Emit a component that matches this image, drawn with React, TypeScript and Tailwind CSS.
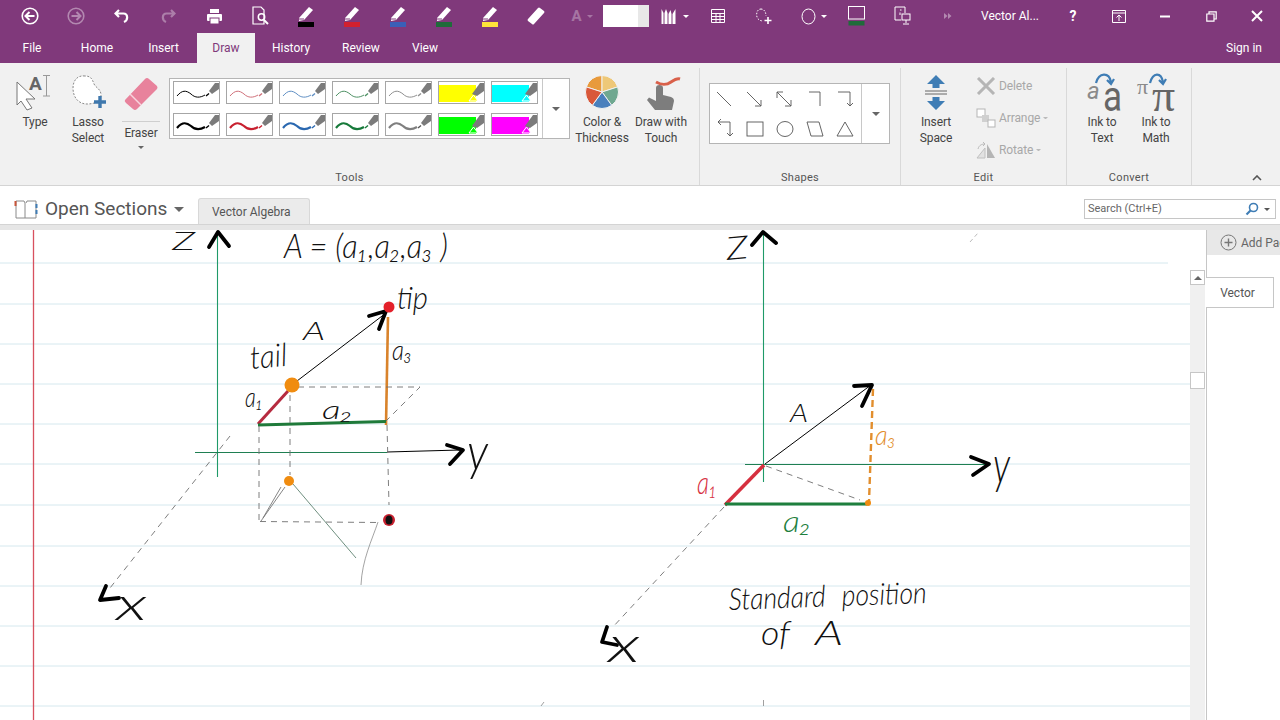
import React from "react";

const ink = "'Lato', 'DejaVu Sans', sans-serif";

function Q({ w = 46, children }: { w?: number; children?: React.ReactNode }) {
  return (
    <div className="flex items-center justify-center h-[32px] shrink-0" style={{ width: w }}>
      {children}
    </div>
  );
}

function QPen({ color }: { color: string }) {
  return (
    <svg width="20" height="24" viewBox="0 0 20 24">
      <path d="M3 14 L13 3 L17 6 L8 16 L3 17 Z" fill="#fff" />
      <path d="M3 15 L8 15" stroke="#80397b" strokeWidth="1" />
      <rect x="2" y="18" width="16" height="5" fill={color} />
    </svg>
  );
}

function Caret({ c = "#fff", s = 3 }: { c?: string; s?: number }) {
  return (
    <svg width={s * 2} height={s} viewBox="0 0 6 3" className="shrink-0">
      <path d="M0 0 H6 L3 3 Z" fill={c} />
    </svg>
  );
}

function TitleBar() {
  const stroke = { stroke: "#fff", fill: "none", strokeWidth: 1.6 };
  return (
    <div className="flex h-[33px] pl-[7px] bg-[#80397b] text-white">
      <Q>
        <svg width="18" height="18" viewBox="0 0 18 18">
          <circle cx="9" cy="9" r="7.8" {...stroke} />
          <path d="M13.5 9 H5 M8.5 5 L4.5 9 L8.5 13" {...stroke} strokeWidth="2" />
        </svg>
      </Q>
      <Q>
        <svg width="18" height="18" viewBox="0 0 18 18" opacity="0.4">
          <circle cx="9" cy="9" r="7.8" {...stroke} />
          <path d="M4.5 9 H13 M9.5 5 L13.5 9 L9.5 13" {...stroke} strokeWidth="2" />
        </svg>
      </Q>
      <Q>
        <svg width="16" height="16" viewBox="0 0 16 16">
          <path d="M5 2 L1.5 5.5 L5 9 M2 5.5 H9.5 C14 5.5 14.5 12 10 14" {...stroke} strokeWidth="2.2" />
        </svg>
      </Q>
      <Q>
        <svg width="16" height="16" viewBox="0 0 16 16" opacity="0.35">
          <path d="M11 2 L14.5 5.5 L11 9 M14 5.5 H6.5 C2 5.5 1.5 12 6 14" {...stroke} strokeWidth="2.2" />
        </svg>
      </Q>
      <Q>
        <svg width="17" height="17" viewBox="0 0 17 17">
          <rect x="4" y="1" width="9" height="4" fill="#fff" />
          <rect x="1" y="6" width="15" height="7" rx="1" fill="#fff" />
          <rect x="4" y="10" width="9" height="6" fill="#fff" stroke="#80397b" />
        </svg>
      </Q>
      <Q>
        <svg width="17" height="20" viewBox="0 0 17 20">
          <path d="M1 1 H9 L12 4 V18 H1 Z" {...stroke} strokeWidth="1.2" />
          <circle cx="9.5" cy="11" r="3.2" {...stroke} strokeWidth="1.5" />
          <path d="M12 14 L16 18" {...stroke} strokeWidth="2" />
        </svg>
      </Q>
      <Q><QPen color="#000" /></Q>
      <Q><QPen color="#d2202f" /></Q>
      <Q><QPen color="#3a5fb8" /></Q>
      <Q><QPen color="#1f6b3a" /></Q>
      <Q><QPen color="#ffe43a" /></Q>
      <Q>
        <svg width="18" height="20" viewBox="0 0 18 20">
          <path d="M1 13 L11 2 Q12 1 13 2 L17 5 Q18 6 17 7 L7 18 Q6 19 5 18 L1 15 Q0 14 1 13 Z" fill="#fff" />
        </svg>
      </Q>
      <Q w={44}>
        <div className="flex items-center gap-[5px] opacity-30 pl-[2px]">
          <span className="text-[15px] font-['Roboto',sans-serif] font-bold">A</span>
          <Caret />
        </div>
      </Q>
      <Q>
        <div className="flex w-[46px] h-[22px] bg-white">
          <div className="flex-1" />
          <div className="w-[11px] bg-[#e8e8e8]" />
        </div>
      </Q>
      <Q>
        <div className="flex items-center gap-[7px] pl-[6px]">
          <svg width="15" height="17" viewBox="0 0 15 17">
            <path d="M0.5 1 L2.5 5 V16 H0.5 Z M3.5 5 L5 1 L6.5 5 V16 H3.5 Z M7.5 6 L9.5 2 L10.5 6 V16 H7.5 Z M11.5 6 L14.5 1 V16 H11.5 Z" fill="#fff" />
          </svg>
          <Caret />
        </div>
      </Q>
      <Q w={45}>
        <svg width="14" height="14" viewBox="0 0 14 14">
          <path d="M0.5 0.5 H13.5 V13.5 H0.5 Z M0.5 4.5 H13.5 M0.5 7.5 H13.5 M0.5 10.5 H13.5 M5 4.5 V13.5 M9 4.5 V13.5" stroke="#fff" fill="none" />
        </svg>
      </Q>
      <Q w={47}>
        <svg width="16" height="17" viewBox="0 0 16 17">
          <path d="M5 1 C1 1 0 6 1 9 C2 12 5 13 7 13 M5 1 C8 1 10 4 10 8" stroke="#fff" strokeDasharray="1.5 1.5" fill="none" />
          <path d="M12 9 V16 M8.5 12.5 H15.5" stroke="#fff" strokeWidth="1.6" />
        </svg>
      </Q>
      <Q>
        <div className="flex items-center gap-[5px] pl-[8px]">
          <svg width="15" height="17" viewBox="0 0 15 17"><ellipse cx="7.5" cy="8.5" rx="6.5" ry="7.5" stroke="#fff" fill="none" /></svg>
          <Caret />
        </div>
      </Q>
      <Q>
        <svg width="17" height="20" viewBox="0 0 17 20">
          <rect x="0.5" y="0.5" width="16" height="12.5" stroke="#fff" fill="none" />
          <rect x="0.5" y="15" width="16" height="4.5" fill="#1f6b3a" />
        </svg>
      </Q>
      <Q>
        <svg width="17" height="20" viewBox="0 0 17 20">
          <path d="M7 14 H1 V1 H11 V7 M6 4 H7.5 M6 6.5 V9" stroke="#fff" fill="none" />
          <rect x="8" y="8" width="8" height="6" stroke="#fff" fill="none" />
          <path d="M12 14 V17 M9 18 H15" stroke="#fff" />
        </svg>
      </Q>
      <Q>
        <svg width="8" height="8" viewBox="0 0 8 8" opacity="0.4">
          <path d="M0 1 L3.5 4 L0 7 Z M4 1 L7.5 4 L4 7 Z" fill="#fff" />
        </svg>
      </Q>
      <div className="flex items-center w-[79px] pl-[10px] h-[32px] shrink-0 text-[12px] font-['Roboto',sans-serif] whitespace-nowrap">
        Vector Al...
      </div>
      <Q><span className="text-[14px] font-bold font-['Roboto',sans-serif]">?</span></Q>
      <Q>
        <svg width="14" height="13" viewBox="0 0 14 13">
          <path d="M0.5 0.5 H13.5 V12.5 H0.5 Z M0.5 3 H13.5" stroke="#fff" fill="none" />
          <path d="M7 11 V5 M4.5 7.5 L7 5 L9.5 7.5" stroke="#fff" fill="none" />
        </svg>
      </Q>
      <Q>
        <svg width="10" height="3" viewBox="0 0 10 3"><rect width="10" height="2" y="0.5" fill="#fff" /></svg>
      </Q>
      <Q>
        <svg width="11" height="11" viewBox="0 0 11 11">
          <path d="M0.8 3 H8 V10.2 H0.8 Z M3 3 V0.8 H10.2 V8 H8" stroke="#fff" strokeWidth="1.2" fill="none" />
        </svg>
      </Q>
      <Q>
        <svg width="12" height="12" viewBox="0 0 12 12"><path d="M1 1 L11 11 M11 1 L1 11" stroke="#fff" strokeWidth="2" /></svg>
      </Q>
    </div>
  );
}

function Tabs() {
  const tabs: [string, number][] = [
    ["File", 64],
    ["Home", 66],
    ["Insert", 67],
  ];
  const after: [string, number][] = [
    ["History", 72],
    ["Review", 68],
    ["View", 60],
  ];
  const cls = "flex items-center justify-center text-[12px] h-full";
  return (
    <div className="flex h-[30px] bg-[#80397b] text-white font-['Roboto',sans-serif]">
      {tabs.map(([t, w]) => (
        <div key={t} className={cls} style={{ width: w }}>{t}</div>
      ))}
      <div className="flex items-center justify-center w-[58px] h-full text-[12px] bg-[#f1f1f1] text-[#80397b]">Draw</div>
      {after.map(([t, w]) => (
        <div key={t} className={cls} style={{ width: w }}>{t}</div>
      ))}
      <div className="flex-1" />
      <div className="flex items-center pr-[18px] text-[12px]">Sign in</div>
    </div>
  );
}

function Btn({ w, ml = 0, icon, lines }: { w: number; ml?: number; icon: React.ReactNode; lines: string[] }) {
  return (
    <div className="flex flex-col items-center shrink-0 pt-[12px] text-[12px] leading-[16px] tracking-[-0.1px] text-[#444]" style={{ width: w, marginLeft: ml }}>
      <div className="flex items-center justify-center h-[39px]">{icon}</div>
      {lines.map((l) => (
        <div key={l} className="whitespace-nowrap">{l}</div>
      ))}
    </div>
  );
}

function Swatch({ color, heavy, hi }: { color: string; heavy?: boolean; hi?: boolean }) {
  return (
    <div className="w-[47px] h-[23px] bg-white border border-[#a6a6a6] shrink-0">
      <svg width="45" height="21" viewBox="0 0 45 21" className="block">
        {hi ? (
          <>
            <rect x="0" y="3" width="37" height="17" fill={color} />
            <path d="M30 19 L34.5 13 L39 19 Z" fill={color} stroke="#fff" strokeWidth="1" />
          </>
        ) : (
          <path d="M3 14 C8 8 12 8 17 12 C21 16 26 16 31 13" fill="none" stroke={color} strokeWidth={heavy ? 2.2 : 1} />
        )}
        <path d={hi ? "M33 12 L41 1 H45 V9 L38 14 Z" : "M35 9 L41 1 H45 V7 L38 12 Z"} fill="#7b7b7b" />
        {!hi && <path d="M32 14 L35 11.5" stroke={color === "#7f7f7f" ? "#555" : color} strokeWidth="1.4" />}
      </svg>
    </div>
  );
}

function polar(r: number, deg: number) {
  const a = ((deg - 90) * Math.PI) / 180;
  return `${17 + r * Math.cos(a)} ${17 + r * Math.sin(a)}`;
}

function Wheel() {
  const s: [number, number, string][] = [
    [-72, 0, "#e89a3c"],
    [0, 72, "#eec878"],
    [72, 144, "#6fa890"],
    [144, 216, "#4a80bd"],
    [216, 288, "#d9583a"],
  ];
  return (
    <svg width="34" height="34" viewBox="0 0 34 34" className="-mt-[6px]">
      {s.map(([a, b, c]) => (
        <path key={c} d={`M17 17 L${polar(16.5, a)} A16.5 16.5 0 0 1 ${polar(16.5, b)} Z`} fill={c} stroke="#f1f1f1" strokeWidth="1" />
      ))}
    </svg>
  );
}

function ShapeCell({ d }: { d: React.ReactNode }) {
  return (
    <svg width="30" height="24" viewBox="0 0 30 24" className="shrink-0">
      <g stroke="#555" fill="none" strokeWidth="0.9">{d}</g>
    </svg>
  );
}

function Group({ w, label, children, border = true }: { w: number; label: string; children: React.ReactNode; border?: boolean }) {
  return (
    <div className={`relative flex flex-col shrink-0 h-[117px] mt-[5px] ${border ? "border-r border-[#d9d9d9]" : ""}`} style={{ width: w }}>
      <div className="flex h-[100px]">{children}</div>
      <div className="flex-1 flex items-start justify-center pt-[3px] text-[11px] leading-[14px] text-[#555] tracking-[0.3px]">{label}</div>
    </div>
  );
}

function Ribbon() {
  const cols: [string, boolean][] = [
    ["#000", false],
    ["#d0707a", false],
    ["#5f8fc4", false],
    ["#4d9063", false],
    ["#8f8f8f", false],
    ["#ffff00", true],
    ["#00ffff", true],
  ];
  const cols2: [string, boolean][] = [
    ["#000", false],
    ["#c8202f", false],
    ["#2a68b0", false],
    ["#177a3a", false],
    ["#7f7f7f", false],
    ["#00ff00", true],
    ["#ff00ff", true],
  ];
  return (
    <div className="flex h-[123px] bg-[#f1f1f1] border-b border-[#d4d4d4] font-['Roboto',sans-serif]">
      <Group w={700} label="Tools">
        <div className="flex items-start -mt-[5px] w-full">
          <Btn w={42} ml={14} lines={["Type"]} icon={
            <svg width="42" height="39" viewBox="0 0 42 39" className="overflow-visible">
              <path d="M3 7 L21 24 L12 24 L18 33 L13 35 L7 26 L3 30 Z" fill="#fff" stroke="#777" />
              <text x="15" y="15" fontFamily="'Roboto',sans-serif" fontWeight="700" fontSize="19" fill="#666">A</text>
              <path d="M29 0.5 H36 M32.5 0.5 V21 M29 21 H36" stroke="#999" fill="none" />
            </svg>
          } />
          <Btn w={44} ml={10} lines={["Lasso", "Select"]} icon={
            <svg width="38" height="39" viewBox="0 0 38 39">
              <path d="M16 1 C8 0 4 6 4 13 C4 23 10 29 18 29 C26 29 32 26 32 20 C32 14 27 13 25 9 C23 3 21 1 16 1 Z" fill="#fff" stroke="#888" strokeDasharray="2 1.5" />
              <path d="M31 21 V33 M25 27 H37" stroke="#3f78ad" strokeWidth="3.4" />
            </svg>
          } />
          <div className="flex flex-col items-center shrink-0 w-[42px] ml-[10px] pt-[14px] text-[12px] leading-[16px] tracking-[-0.1px] text-[#444]">
            <svg width="34" height="34" viewBox="0 0 34 34">
              <path d="M1 23 L21 2 Q23 0 25 2 L33 9 Q34 11 33 12 L13 32 Q11 34 9 32 L2 26 Q0 24 1 23 Z" fill="#e8829c" />
              <path d="M6 17 L17 28" stroke="#f7d5de" strokeWidth="1.4" />
            </svg>
            <div className="w-[38px] h-px bg-[#cfcfcf] mt-[10px] mb-[3px]" />
            <div>Eraser</div>
            <div className="mt-[5px]"><Caret c="#666" /></div>
          </div>
          <div className="flex shrink-0 ml-[7px] mt-[15px] h-[61px] w-[401px] bg-white border border-[#b5b5b5]">
            <div className="flex flex-col justify-between py-[2px] pl-[3px] w-[373px] border-r border-[#c8c8c8]">
              <div className="flex gap-[6px]">{cols.map(([c, h], i) => <Swatch key={i} color={c} hi={h} />)}</div>
              <div className="flex gap-[6px]">{cols2.map(([c, h], i) => <Swatch key={i} color={c} hi={h} heavy />)}</div>
            </div>
            <div className="flex-1 flex items-center justify-center"><Caret c="#666" s={4} /></div>
          </div>
          <Btn w={54} ml={5} lines={["Color &", "Thickness"]} icon={<Wheel />} />
          <Btn w={60} ml={2} lines={["Draw with", "Touch"]} icon={
            <svg width="40" height="38" viewBox="0 0 40 38">
              <path d="M15 12 Q15 9 18.5 9 Q22 9 22 12 L22 19 L30 21 Q33 22 33 25 L31 34 H14 L6 24 L8 21.5 L15 25 Z" fill="#7d7d7d" />
              <path d="M15 6 C20 9 26 9 30 6 C33 4 36 2 39 3" stroke="#d9604a" strokeWidth="3" fill="none" />
            </svg>
          } />
        </div>
      </Group>
      <Group w={201} label="Shapes">
        <div className="flex shrink-0 ml-[9px] mt-[15px] h-[61px] w-[181px] bg-white border border-[#b5b5b5]">
          <div className="flex flex-col justify-between pt-[3px] pb-[2px] w-[152px] border-r border-[#c8c8c8]">
            <div className="flex">
              <ShapeCell d={<path d="M7 5 L21 19" />} />
              <ShapeCell d={<path d="M7 5 L21 19 M21 13 V19 H15" />} />
              <ShapeCell d={<path d="M7 5 L21 19 M21 13 V19 H15 M7 11 V5 H13" />} />
              <ShapeCell d={<path d="M9 5 H20 V19" />} />
              <ShapeCell d={<path d="M8 5 H20 V19 M17 16 L20 19 L23 16" />} />
            </div>
            <div className="flex">
              <ShapeCell d={<path d="M8 5 H20 V19 M11 2 L8 5 L11 8 M17 16 L20 19 L23 16" />} />
              <ShapeCell d={<rect x="7" y="5" width="16" height="14" />} />
              <ShapeCell d={<ellipse cx="15" cy="12" rx="8" ry="7.5" />} />
              <ShapeCell d={<path d="M7 5 H19 L23 19 H11 Z" />} />
              <ShapeCell d={<path d="M15 5 L23 19 H7 Z" />} />
            </div>
          </div>
          <div className="flex-1 flex items-center justify-center"><Caret c="#666" s={4} /></div>
        </div>
      </Group>
      <Group w={166} label="Edit">
        <div className="flex items-start w-full -mt-[5px]">
          <Btn w={50} ml={10} lines={["Insert", "Space"]} icon={
            <svg width="22" height="36" viewBox="0 0 22 36" className="-mt-[3px]">
              <path d="M11 0 L20 9 H14.5 V13 H7.5 V9 H2 Z M11 35 L20 26 H14.5 V22 H7.5 V26 H2 Z" fill="#3f7db5" />
              <path d="M0 16 H22 M0 19 H22" stroke="#666" />
            </svg>
          } />
          <div className="flex flex-col ml-[15px] pt-[7px] text-[12px] tracking-[-0.1px] text-[#a8a8a8]">
            <div className="flex items-center h-[32px] gap-[3px]">
              <svg width="20" height="18" viewBox="0 0 20 18"><path d="M2 1 L18 17 M18 1 L2 17" stroke="#b5b5b5" strokeWidth="3" /></svg>
              <span>Delete</span>
            </div>
            <div className="flex items-center h-[32px] gap-[3px]">
              <svg width="20" height="20" viewBox="0 0 20 20">
                <rect x="1" y="1" width="8" height="8" fill="#fff" stroke="#b5b5b5" />
                <rect x="6" y="7" width="7" height="7" fill="#d0d0d0" />
                <rect x="12" y="12" width="7" height="7" fill="#fff" stroke="#b5b5b5" />
              </svg>
              <span>Arrange</span>
              <Caret c="#bbb" s={2.5} />
            </div>
            <div className="flex items-center h-[32px] gap-[3px]">
              <svg width="20" height="18" viewBox="0 0 20 18">
                <path d="M1 17 L9 7 V17 Z" fill="#e2e2e2" stroke="#c0c0c0" />
                <path d="M11 3 L19 17 H11 Z" fill="#b5b5b5" />
                <path d="M2 8 C3 4 6 3 9 3 M7 1 L9 3 L7 5" stroke="#bbb" fill="none" />
              </svg>
              <span>Rotate</span>
              <Caret c="#bbb" s={2.5} />
            </div>
          </div>
        </div>
      </Group>
      <Group w={125} label="Convert">
        <div className="flex items-start w-full -mt-[5px]">
          <Btn w={44} ml={13} lines={["Ink to", "Text"]} icon={
            <svg width="44" height="39" viewBox="0 0 44 39" className="overflow-visible">
              <path d="M16 8 C19 -3 29 -3 31 7 M27 5 L31 9 L34 4" stroke="#3f7db5" strokeWidth="2.2" fill="none" />
              <text x="7" y="24" fontFamily="'Roboto',sans-serif" fontStyle="italic" fontSize="24" fill="#8a8a8a" textLength="12">a</text>
              <text x="23" y="36" fontFamily="'Roboto',sans-serif" fontSize="43" fill="#666" textLength="19" lengthAdjust="spacingAndGlyphs">a</text>
            </svg>
          } />
          <Btn w={44} ml={10} lines={["Ink to", "Math"]} icon={
            <svg width="44" height="39" viewBox="0 0 44 39" className="overflow-visible">
              <path d="M16 8 C19 -3 27 -3 29 7 M25 5 L29 9 L32 4" stroke="#3f7db5" strokeWidth="2.2" fill="none" />
              <text x="3" y="19" fontFamily="'Liberation Serif',serif" fontSize="22" fill="#8a8a8a">π</text>
              <text x="18" y="36" fontFamily="'Liberation Serif',serif" fontSize="46" fill="#666" textLength="23" lengthAdjust="spacingAndGlyphs">π</text>
            </svg>
          } />
        </div>
      </Group>
      <div className="flex-1 flex items-end justify-end pr-[18px] pb-[4px]">
        <svg width="10" height="6" viewBox="0 0 10 6"><path d="M1 5 L5 1 L9 5" stroke="#555" strokeWidth="1.6" fill="none" /></svg>
      </div>
    </div>
  );
}

function NavBar() {
  return (
    <div className="flex items-end h-[39px] bg-white border-b border-[#d4d4d4] font-['Roboto',sans-serif]">
      <div className="flex items-center h-full pl-[14px] pt-[8px]">
        <svg width="24" height="20" viewBox="0 0 24 20">
          <path d="M2 2 H10 L11 4 V19 H2 Z M12 4 L13 2 H22 V19 H11" fill="#fff" stroke="#8a8a8a" />
          <rect x="0.5" y="2" width="2" height="5" fill="#c8553a" />
          <rect x="21.5" y="5" width="2" height="4" fill="#3f7db5" />
          <rect x="21.5" y="11" width="2" height="4" fill="#3f7db5" />
        </svg>
        <span className="ml-[7px] text-[19px] text-[#555] whitespace-nowrap">Open Sections</span>
        <span className="ml-[7px]"><Caret c="#666" s={5} /></span>
      </div>
      <div className="ml-[14px] flex items-center justify-center pr-[6px] w-[112px] h-[26px] bg-[#ebebeb] border border-b-0 border-[#d8d8d8] rounded-t-[3px] text-[12px] text-[#555]">
        Vector Algebra
      </div>
      <div className="flex-1" />
      <div className="flex items-center w-[192px] h-[20px] mb-[5px] mr-[4px] bg-white border border-[#c6c6c6] pl-[3px] pr-[5px] text-[11px] text-[#666]">
        <span className="flex-1">Search (Ctrl+E)</span>
        <svg width="14" height="14" viewBox="0 0 14 14">
          <circle cx="8.5" cy="5.5" r="4" fill="none" stroke="#3f7db5" strokeWidth="1.6" />
          <path d="M5.5 8.5 L1.5 12.5" stroke="#3f7db5" strokeWidth="2.2" />
        </svg>
        <span className="ml-[5px]"><Caret c="#555" /></span>
      </div>
    </div>
  );
}

function Hand({ x, y, w, size, children, fill = "#111", rot = 0 }: { x: number; y: number; w?: number; size: number; children: string; fill?: string; rot?: number }) {
  return (
    <text
      x={x}
      y={y}
      fontFamily={ink}
      fontStyle="italic"
      fontWeight={300}
      fontSize={size}
      fill={fill}
      textLength={w}
      lengthAdjust={w ? "spacingAndGlyphs" : undefined}
      transform={rot ? `rotate(${rot} ${x} ${y})` : undefined}
    >
      {children}
    </text>
  );
}

function Canvas() {
  const rules = [263, 304, 344, 384, 424, 464, 505, 546, 586, 626, 666, 706];
  const dash = { stroke: "#6f6f6f", strokeWidth: 0.9, strokeDasharray: "6 5", fill: "none" };
  const head = { stroke: "#000", fill: "none", strokeWidth: 3.8, strokeLinecap: "round" as const, strokeLinejoin: "round" as const };
  return (
    <svg width="1190" height="490" viewBox="0 230 1190 490" className="block shrink-0 bg-white overflow-visible">
      {rules.map((y, i) => (
        <line key={y} x1="0" x2={i === 0 ? 1168 : 1190} y1={y} y2={y} stroke="#d5e8ee" strokeWidth="1" />
      ))}
      <line x1="33.5" x2="33.5" y1="230" y2="720" stroke="#d8505f" strokeWidth="1.3" />

      {/* left figure */}
      <line x1="217.5" x2="217.5" y1="232" y2="477" stroke="#1f9a68" strokeWidth="1.1" />
      <path d="M209 247 L218 232 L229 246" {...head} />
      <line x1="195" x2="387" y1="452.5" y2="452.5" stroke="#1f7f52" strokeWidth="1.1" />
      <path d="M387 452 L460 450" stroke="#000" strokeWidth="1.2" />
      <path d="M447 445 L463 450 L450 464" {...head} />
      <path d="M230 436 L110 588" {...dash} />
      <path d="M106 586 L100 600 L119 598" {...head} />
      <path d="M297 381 L386 313" stroke="#000" strokeWidth="1" />
      <path d="M369 316 L386 311 L379 329" {...head} />
      <path d="M388 317 L386 425" stroke="#d9832b" strokeWidth="2.6" />
      <path d="M258 424 L288 391" stroke="#b62b3f" strokeWidth="3" />
      <path d="M258 425 L386 421.5" stroke="#1f7a3a" strokeWidth="3" />
      <path d="M298 387 H420 L386 421" {...dash} />
      <path d="M259 426 V520 M290 395 V475 M387 425 L389 505" {...dash} />
      <path d="M260 521.5 L378 522.5" {...dash} />
      <path d="M293 484 L356 558" stroke="#6f8f7f" strokeWidth="1" fill="none" />
      <path d="M378 522 C372 540 362 560 361 585" stroke="#999" strokeWidth="0.9" fill="none" />
      <path d="M285 487 L261 521 M281 487 L263 518" stroke="#777" strokeWidth="0.9" />
      <circle cx="389" cy="307" r="5.5" fill="#e3202a" />
      <circle cx="292" cy="385" r="7.5" fill="#f08c10" />
      <circle cx="289" cy="481" r="5" fill="#f08c10" />
      <circle cx="389" cy="520" r="6" fill="#c8202f" />
      <ellipse cx="389" cy="520" rx="3.5" ry="4.5" fill="#111" />

      <Hand x={172} y={250} w={23} size={25}>Z</Hand>
      <Hand x={284} y={258} w={164} size={33}>{"A = (a₁,a₂,a₃ )"}</Hand>
      <Hand x={397} y={309} w={31} size={32}>tip</Hand>
      <Hand x={303} y={340} w={22} size={25}>A</Hand>
      <Hand x={251} y={369} w={37} size={32} rot={-5}>tail</Hand>
      <Hand x={392} y={360} w={20} size={28}>a₃</Hand>
      <Hand x={245} y={407} w={18} size={27}>a₁</Hand>
      <Hand x={322} y={419} w={31} size={26}>a₂</Hand>
      <Hand x={467} y={470} w={21} size={52}>y</Hand>
      <Hand x={116} y={620} w={31} size={46}>x</Hand>

      {/* right figure */}
      <line x1="763.5" x2="763.5" y1="232" y2="482" stroke="#1f9a68" strokeWidth="1.1" />
      <path d="M752 245 L763 232 L776 243" {...head} />
      <line x1="745" x2="985" y1="464.5" y2="464.5" stroke="#1f7f52" strokeWidth="1.1" />
      <path d="M971 457 L989 464 L973 475" {...head} />
      <path d="M765 464 L871 385" stroke="#000" strokeWidth="1" />
      <path d="M854 386 L872 385 L862 406" {...head} />
      <path d="M873 389 L869 502" stroke="#e28e2d" strokeWidth="2.4" strokeDasharray="7 4" />
      <path d="M725 505 L764 465" stroke="#d6303f" strokeWidth="3.6" />
      <path d="M725 504 L867 504" stroke="#1e7f3d" strokeWidth="3" />
      <path d="M766 466 L860 500" {...dash} />
      <path d="M724 507 L612 628" {...dash} />
      <path d="M607 627 L602 642 L617 645" {...head} />
      <circle cx="868" cy="503" r="3" fill="#f08c10" />
      <path d="M970 242 L978 233" stroke="#aaa" strokeWidth="0.8" strokeDasharray="4 3" />
      <path d="M763.5 700 V706 M541 706 L544 702" stroke="#888" strokeWidth="0.8" />

      <Hand x={727} y={260} w={22} size={32} rot={-5}>Z</Hand>
      <Hand x={790} y={422} w={18} size={26}>A</Hand>
      <Hand x={875} y={445} w={21} size={28} fill="#e28e2d">a₃</Hand>
      <Hand x={697} y={494} w={20} size={32} fill="#d6303f">a₁</Hand>
      <Hand x={783} y={532} w={28} size={30} fill="#1e7f3d">a₂</Hand>
      <Hand x={993} y={483} w={17} size={52}>y</Hand>
      <Hand x={608} y={662} w={32} size={50}>x</Hand>
      <Hand x={729} y={610} w={97} size={30} rot={-2}>Standard</Hand>
      <Hand x={842} y={606} w={85} size={30} rot={-2}>position</Hand>
      <Hand x={761} y={645} w={29} size={34}>of</Hand>
      <Hand x={815} y={645} w={28} size={34}>A</Hand>
    </svg>
  );
}

function SidePanel() {
  return (
    <div className="flex flex-1 min-w-0 font-['Roboto',sans-serif] bg-white">
      <div className="flex flex-col items-center w-[16px] shrink-0 bg-white">
        <div className="h-[40px] w-full bg-white" />
        <div className="flex-1 w-[15px] self-start bg-[#f0f0f0] flex flex-col">
          <div className="flex items-center justify-center w-[15px] h-[15px] bg-white border border-[#c6c6c6]">
            <svg width="8" height="4" viewBox="0 0 8 4"><path d="M0 4 L4 0 L8 4 Z" fill="#666" /></svg>
          </div>
          <div className="w-[15px] h-[17px] mt-[87px] bg-white border border-[#c6c6c6]" />
        </div>
      </div>
      <div className="flex flex-col flex-1 min-w-0 border-l border-[#c6c6c6]">
        <div className="flex items-center h-[25px] bg-[#e8e8e8] pl-[13px] text-[12px] text-[#666] whitespace-nowrap overflow-hidden">
          <svg width="17" height="17" viewBox="0 0 17 17" className="shrink-0">
            <circle cx="8.5" cy="8.5" r="7.5" fill="none" stroke="#777" />
            <path d="M8.5 4.5 V12.5 M4.5 8.5 H12.5" stroke="#777" strokeWidth="1.4" />
          </svg>
          <span className="ml-[4px]">Add Page</span>
        </div>
        <div className="flex items-center justify-center pr-[4px] mt-[22px] w-[68px] h-[31px] -ml-px bg-white border border-l-0 border-[#c6c6c6] text-[12px] text-[#555]">
          Vector
        </div>
      </div>
    </div>
  );
}

export default function App() {
  return (
    <div className="w-[1280px] h-[720px] overflow-hidden flex flex-col bg-white">
      <TitleBar />
      <Tabs />
      <Ribbon />
      <NavBar />
      <div className="h-[5px] bg-[#e6e6e6]" />
      <div className="flex flex-1 min-h-0">
        <Canvas />
        <SidePanel />
      </div>
    </div>
  );
}
